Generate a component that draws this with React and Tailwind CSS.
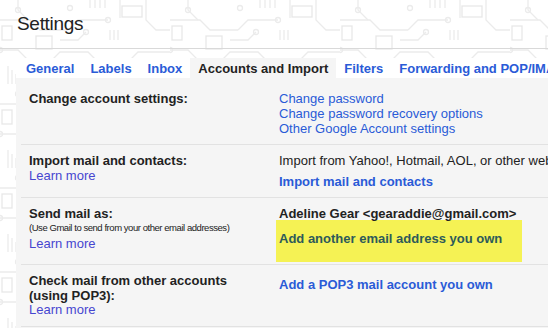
import React from 'react';

// Faint circuit-board theme drawn behind the header, tab strip and left gutter.
function CircuitBackdrop() {
  return (
    <svg className="absolute inset-0 h-full w-full" aria-hidden="true">
      <defs>
        <pattern id="circuit" width="170" height="84" patternUnits="userSpaceOnUse">
          <g fill="none" stroke="#ebebeb" strokeWidth="1.3">
            <path d="M0 20 H30 L40 30 H68" />
            <path d="M18 0 V10 L28 20" />
            <path d="M68 30 L78 20 H108" />
            <path d="M50 84 V62 L60 52 H88 L98 62 H128" />
            <path d="M120 18 V0" />
            <path d="M128 62 L138 52 H170" />
            <path d="M0 50 H18 L28 60 V84" />
            <path d="M146 0 V20 L156 30 H170" />
            <path d="M8 66 V84 M12 70 V84 M16 74 V84" />
            <path d="M90 0 V8 M95 0 V8 M100 0 V8 M105 0 V8" />
            <path d="M60 40 H78 L86 32" />
            <path d="M110 40 V30 M114 40 V30 M118 40 V30" />
            <circle cx="18" cy="10" r="2.5" />
            <circle cx="108" cy="20" r="2.5" />
            <circle cx="128" cy="62" r="2.5" />
            <circle cx="0" cy="50" r="2.5" />
            <circle cx="86" cy="32" r="2.5" />
            <circle cx="40" cy="70" r="2.5" />
            <circle cx="150" cy="74" r="2.5" />
            <circle cx="70" cy="8" r="2.5" />
          </g>
          <g fill="#ffffff" stroke="#e8e8e8" strokeWidth="1.3">
            <rect x="122" y="6" width="20" height="11" />
            <rect x="36" y="36" width="16" height="13" />
            <rect x="96" y="68" width="12" height="12" />
            <rect x="2" y="26" width="10" height="14" />
          </g>
        </pattern>
      </defs>
      <rect width="100%" height="100%" fill="url(#circuit)" />
    </svg>
  );
}

const tabs = ['General', 'Labels', 'Inbox', 'Accounts and Import', 'Filters', 'Forwarding and POP/IMAP'];

function Tab({ label, active }) {
  return (
    <div
      className={
        'h-[20px] shrink-0 whitespace-nowrap px-2 text-[13px] font-bold leading-[21px] ' +
        (active ? 'bg-[#f5f5f5] text-[#222222]' : 'text-[#2a5bd7]')
      }
    >
      {label}
    </div>
  );
}

function Row({ left, right, className = '' }) {
  return (
    <div className={`flex border-t border-[#e2e2e2] ${className}`}>
      <div className="w-[258px] shrink-0 pl-2">{left}</div>
      <div className="min-w-0 flex-1 whitespace-nowrap">{right}</div>
    </div>
  );
}

const learnMore = <div className="text-[#4646d0]">Learn more</div>;

export default function App() {
  return (
    <div className="relative h-[328px] w-[548px] overflow-hidden bg-white font-['Liberation_Sans',Arial,sans-serif] text-[13px] leading-[15px] text-[#222222]">
      <CircuitBackdrop />
      <div className="relative">
        {/* header */}
        <div className="h-[49px] border-b border-[#d9d9d9] pl-[17px] pt-[14px]">
          <h1 className="text-[19px] leading-[20px] tracking-[-0.3px] text-[#222222]">Settings</h1>
        </div>

        {/* tabs */}
        <div className="ml-4 mt-[9px] flex bg-white pl-[2px]">
          {tabs.map((t) => (
            <Tab key={t} label={t} active={t === 'Accounts and Import'} />
          ))}
        </div>

        {/* settings panel */}
        <div className="ml-4 bg-[#f5f5f5] pl-[5px] pt-[5px]">
          <Row
            className="border-t-0 pb-2 pt-2"
            left={<div className="font-bold">Change account settings:</div>}
            right={
              <div className="text-[#2a5bd7]">
                <div>Change password</div>
                <div>Change password recovery options</div>
                <div>Other Google Account settings</div>
              </div>
            }
          />
          <Row
            className="pb-2 pt-2"
            left={
              <>
                <div className="font-bold">Import mail and contacts:</div>
                {learnMore}
              </>
            }
            right={
              <>
                <div>Import from Yahoo!, Hotmail, AOL, or other webmail or POP3 accounts.</div>
                <div className="mt-[6px] font-bold text-[#2a5bd7]">Import mail and contacts</div>
              </>
            }
          />
          <Row
            className="pb-[2px] pt-2"
            left={
              <>
                <div className="font-bold">Send mail as:</div>
                <div className="whitespace-nowrap text-[9.5px] leading-[14px] tracking-[-0.45px]">
                  (Use Gmail to send from your other email addresses)
                </div>
                <div className="mt-px">{learnMore}</div>
              </>
            }
            right={
              <>
                <div className="font-bold">Adeline Gear &lt;gearaddie@gmail.com&gt;</div>
                <div className="-ml-[3px] -mt-px h-[42px] w-[246px] bg-[#f5f254] pl-[3px] pt-[11px] font-bold text-[#2d5a5a]">
                  Add another email address you own
                </div>
              </>
            }
          />
          <Row
            className="border-b pb-2 pt-[9px] leading-[14.5px]"
            left={
              <>
                <div className="font-bold">Check mail from other accounts</div>
                <div className="font-bold">(using POP3):</div>
                {learnMore}
              </>
            }
            right={<div className="pt-1 font-bold text-[#2a5bd7]">Add a POP3 mail account you own</div>}
          />
          <div className="h-[10px]" />
        </div>
      </div>
    </div>
  );
}
